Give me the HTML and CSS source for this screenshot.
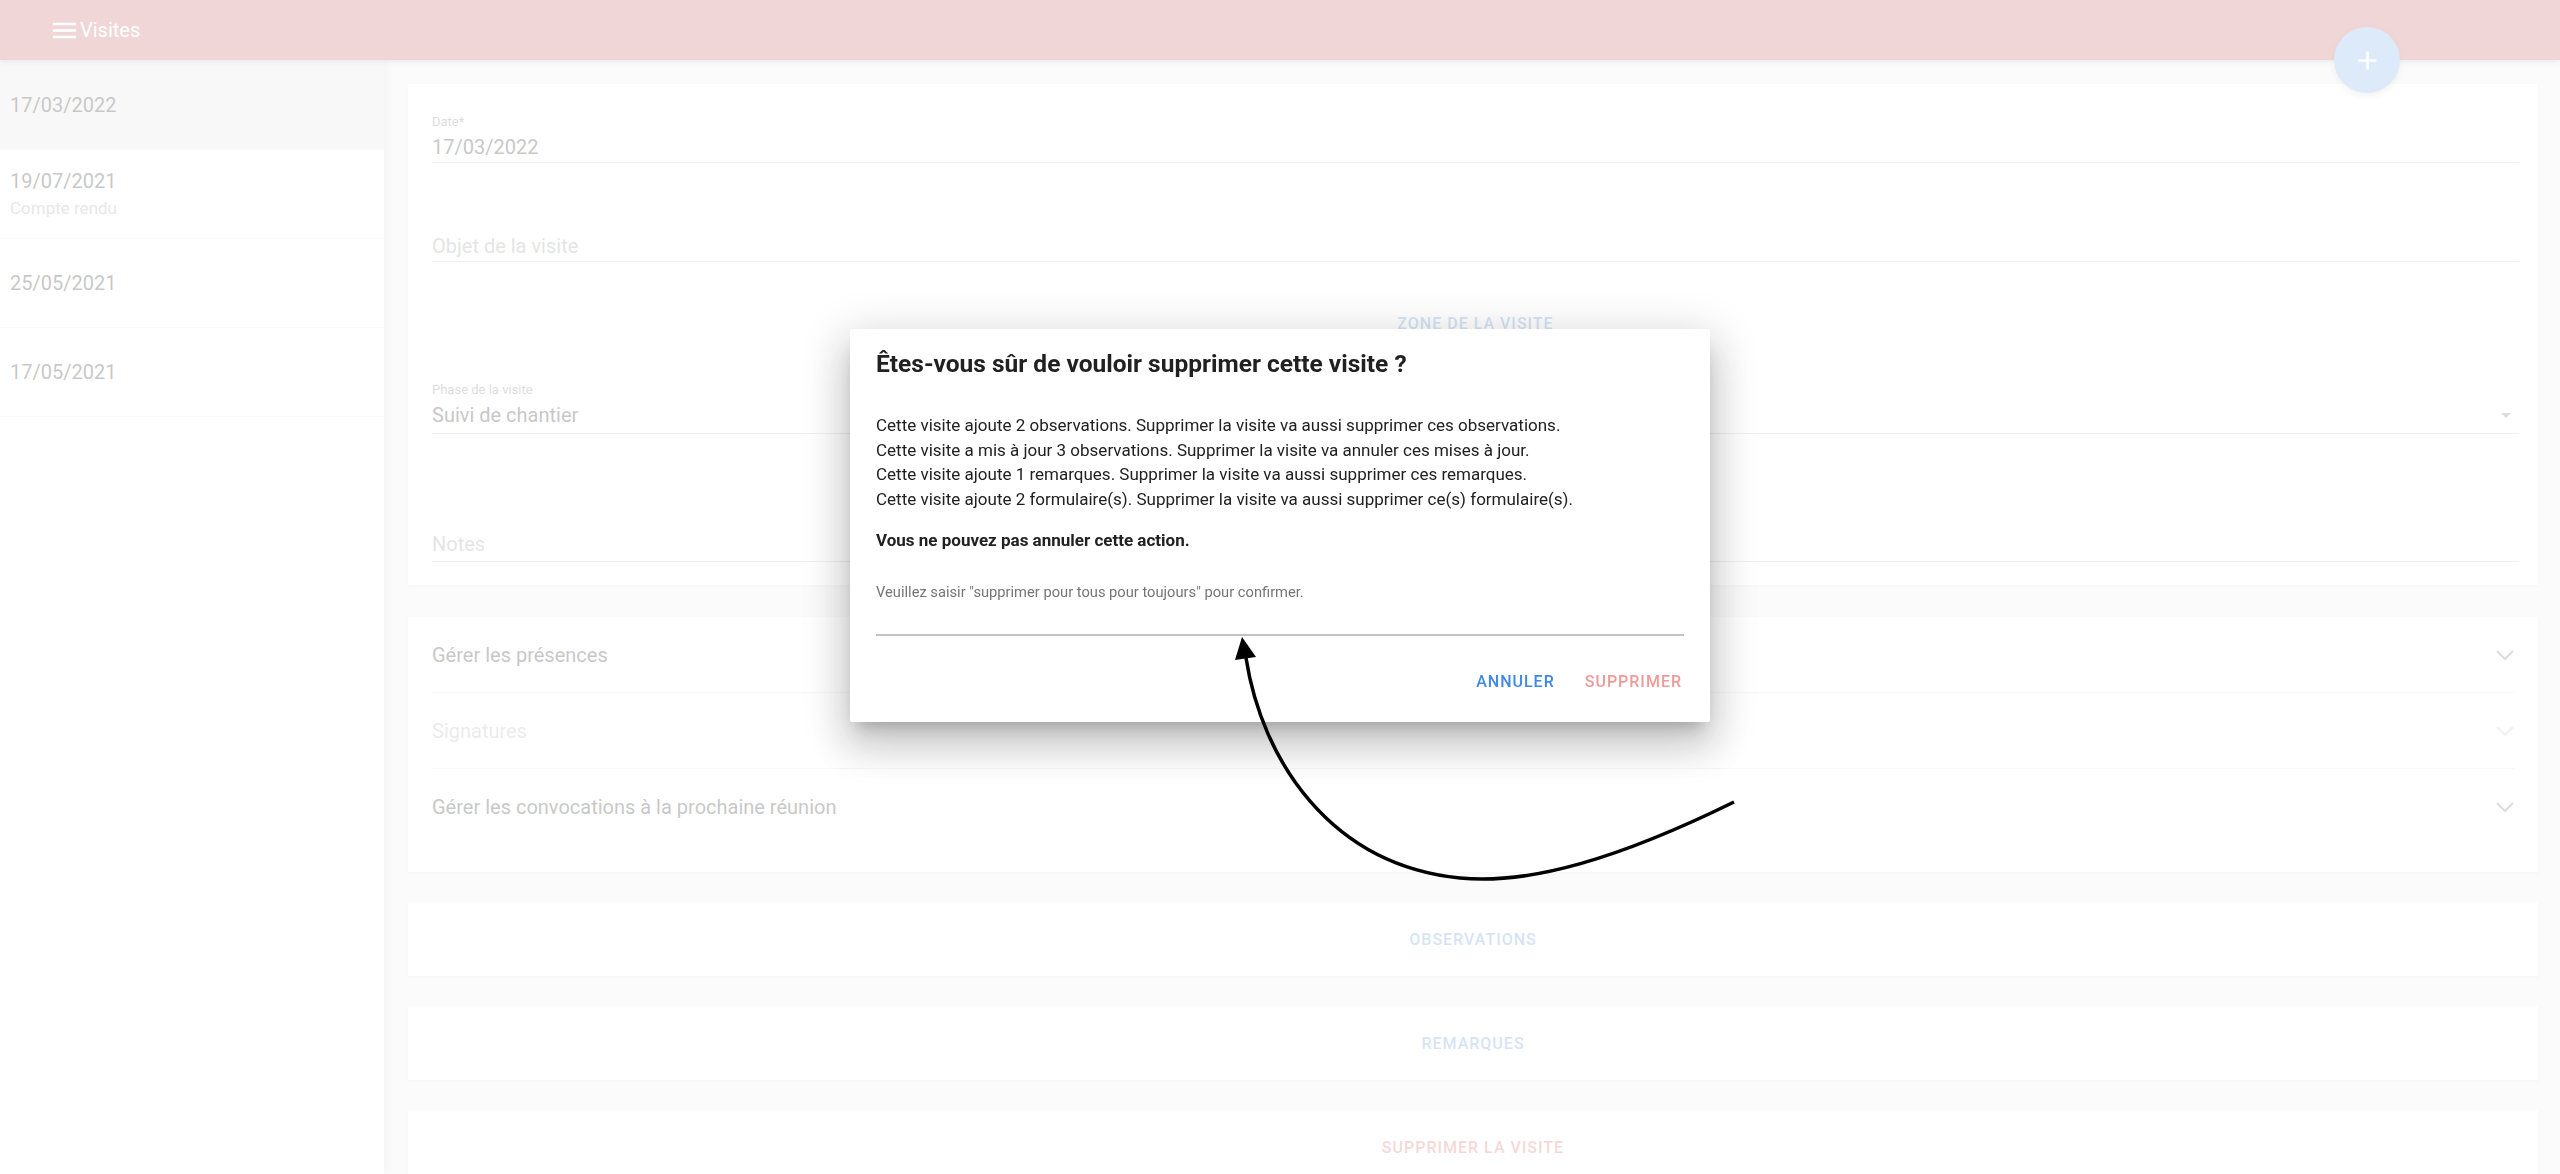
FILE: index.html
```html
<!DOCTYPE html>
<html lang="fr">
<head>
  <meta charset="UTF-8">
  <meta name="viewport" content="width=device-width, initial-scale=1">
  <title>Visites</title>
  <link rel="stylesheet" href="styles.css">
</head>
<body>

  <header class="appbar">
    <svg class="menu-icon" viewBox="0 0 24 24"><path d="M3 18h18v-2H3v2zm0-5h18v-2H3v2zm0-7v2h18V6H3z"/></svg>
    <span class="appbar-title">Visites</span>
    <button class="fab" aria-label="Nouvelle visite">
      <svg viewBox="0 0 24 24"><path d="M19 13h-6v6h-2v-6H5v-2h6V5h2v6h6v2z"/></svg>
    </button>
  </header>

  <div class="layout">
    <aside class="visit-list">
      <div class="visit-item selected"><span class="visit-date">17/03/2022</span></div>
      <div class="visit-item"><span class="visit-date">19/07/2021</span><span class="visit-sub">Compte rendu</span></div>
      <div class="visit-item"><span class="visit-date">25/05/2021</span></div>
      <div class="visit-item"><span class="visit-date">17/05/2021</span></div>
    </aside>

    <main class="visit-detail">
      <section class="card form-card">
        <div class="field">
          <span class="field-label">Date*</span>
          <div class="field-value">17/03/2022</div>
        </div>
        <div class="field field-object">
          <span class="field-label"></span>
          <div class="field-value placeholder">Objet de la visite</div>
        </div>
        <div class="zone-row">
          <button class="text-btn blue">Zone de la visite</button>
        </div>
        <div class="field field-select">
          <span class="field-label">Phase de la visite</span>
          <div class="field-value">
            <span>Suivi de chantier</span>
            <svg class="select-arrow" viewBox="0 0 10 5"><path d="M0 0h10L5 5z"/></svg>
          </div>
        </div>
        <div class="field field-notes">
          <span class="field-label"></span>
          <div class="field-value placeholder">Notes</div>
        </div>
      </section>

      <section class="card panels">
        <div class="panel-header">
          <span>Gérer les présences</span>
          <svg class="chevron" viewBox="0 0 18 10"><path d="M1 1l8 8 8-8"/></svg>
        </div>
        <div class="panel-header disabled">
          <span>Signatures</span>
          <svg class="chevron" viewBox="0 0 18 10"><path d="M1 1l8 8 8-8"/></svg>
        </div>
        <div class="panel-header">
          <span>Gérer les convocations à la prochaine réunion</span>
          <svg class="chevron" viewBox="0 0 18 10"><path d="M1 1l8 8 8-8"/></svg>
        </div>
      </section>

      <section class="card action-card"><button class="text-btn blue">Observations</button></section>
      <section class="card action-card"><button class="text-btn blue">Remarques</button></section>
      <section class="card action-card"><button class="text-btn red">Supprimer la visite</button></section>
    </main>
  </div>

  <div class="scrim">
    <div class="dialog" role="dialog">
      <h2 class="dialog-title">Êtes-vous sûr de vouloir supprimer cette visite ?</h2>
      <div class="dialog-body">
        <p>
          Cette visite ajoute 2 observations. Supprimer la visite va aussi supprimer ces observations.<br>
          Cette visite a mis à jour 3 observations. Supprimer la visite va annuler ces mises à jour.<br>
          Cette visite ajoute 1 remarques. Supprimer la visite va aussi supprimer ces remarques.<br>
          Cette visite ajoute 2 formulaire(s). Supprimer la visite va aussi supprimer ce(s) formulaire(s).
        </p>
        <p class="warning">Vous ne pouvez pas annuler cette action.</p>
        <label class="confirm-label" for="confirmation">Veuillez saisir "supprimer pour tous pour toujours" pour confirmer.</label>
        <input class="confirm-input" id="confirmation" type="text">
      </div>
      <div class="dialog-actions">
        <button class="dialog-btn cancel">Annuler</button>
        <button class="dialog-btn delete">Supprimer</button>
      </div>
    </div>
  </div>

  <!-- flèche d'annotation vers le champ de confirmation -->
  <svg class="annotation" viewBox="0 0 2560 1174">
    <path d="M1734 802 C1620 858 1530 885 1460 878 C1330 865 1262 760 1246 658" fill="none" stroke="#000" stroke-width="3.5"/>
    <polygon points="1242,637 1235,660 1256,657" fill="#000"/>
  </svg>

</body>
</html>
```

FILE: styles.css
```css
html, body {
  margin: 0;
  height: 100%;
  overflow: hidden;
}

body {
  font-family: Roboto, "Liberation Sans", sans-serif;
  color: #212121;
  background-color: #fff;
}

button {
  font-family: inherit;
  border: none;
  background: none;
  cursor: pointer;
  padding: 0;
}

/* barre du haut */
.appbar {
  position: relative;
  z-index: 2;
  height: 60px;
  display: flex;
  align-items: center;
  padding-left: 49px;
  background-color: #c35b5b;
  box-shadow: 0 2px 5px rgba(0,0,0,0.25);
}

.menu-icon {
  width: 31px;
  height: 31px;
  fill: #fff;
}

.appbar-title {
  color: #fff;
  font-size: 20px;
}

.fab {
  position: absolute;
  right: 160px;
  top: 27px;
  width: 66px;
  height: 66px;
  border-radius: 50%;
  background-color: #73abeb;
  display: flex;
  align-items: center;
  justify-content: center;
  box-shadow: 0 3px 6px rgba(0,0,0,0.2);
}

.fab svg {
  width: 31px;
  height: 31px;
  fill: #fff;
}

/* mise en page */
.layout {
  display: flex;
  height: calc(100% - 60px);
}

.visit-list {
  position: relative;
  z-index: 1;
  width: 384px;
  flex-shrink: 0;
  background-color: #fff;
  box-shadow: 2px 0 8px rgba(0,0,0,0.12);
}

.visit-item {
  height: 88px;
  border-bottom: 1px solid #e6e6e6;
  display: flex;
  flex-direction: column;
  justify-content: center;
  padding-left: 10px;
}

.visit-item.selected {
  background-color: #e3e3e3;
  height: 89px;
}

.visit-date {
  font-size: 20px;
  line-height: 28px;
}

.visit-sub {
  font-size: 17px;
  line-height: 26px;
  color: #9b9b9b;
}

.visit-detail {
  flex: 1;
  background-color: #eeeeee;
  padding: 24px 22px 0 24px;
  display: flex;
  flex-direction: column;
  gap: 30px;
}

.card {
  flex-shrink: 0;
  background-color: #fff;
  box-shadow: 0 1px 3px rgba(0,0,0,0.1);
}

/* formulaire de la visite */
.form-card {
  padding: 30px 19px 23px 24px;
}

.field-label {
  display: block;
  height: 16px;
  font-size: 13px;
  line-height: 16px;
  color: #757575;
}

.field-value {
  margin-top: 4px;
  font-size: 20px;
  line-height: 26px;
  padding-bottom: 2px;
  border-bottom: 1px solid #c4c4c4;
}

.placeholder {
  color: #949494;
}

.field-object {
  margin-top: 50px;
}

.zone-row {
  margin-top: 43px;
  display: flex;
  justify-content: center;
}

.field-select {
  margin-top: 41px;
}

.field-select .field-value {
  display: flex;
  justify-content: space-between;
  align-items: center;
  padding-bottom: 5px;
}

.select-arrow {
  width: 10px;
  height: 5px;
  fill: #757575;
  margin-right: 8px;
}

.field-notes {
  margin-top: 77px;
}

.field-notes .field-value {
  padding-bottom: 4px;
}

.text-btn {
  height: 36px;
  padding: 0 16px;
  font-size: 16px;
  font-weight: 500;
  letter-spacing: 1px;
  text-transform: uppercase;
}

.text-btn.blue {
  color: #578fd7;
}

.text-btn.red {
  color: #d75f5f;
}

/* panneaux dépliables */
.panels {
  margin-top: 2px;
  padding: 0 24px 28px 24px;
}

.panel-header {
  height: 75px;
  display: flex;
  align-items: center;
  justify-content: space-between;
  font-size: 20px;
  border-bottom: 1px solid #e0e0e0;
}

.panel-header:last-child {
  border-bottom: none;
}

.panel-header.disabled {
  color: #b0b0b0;
}

.chevron {
  width: 18px;
  height: 10px;
  fill: none;
  stroke: #757575;
  stroke-width: 2;
}

.panel-header.disabled .chevron {
  stroke: #c4c4c4;
}

.action-card {
  height: 74px;
  display: flex;
  align-items: center;
  justify-content: center;
}

/* boîte de confirmation */
.scrim {
  position: fixed;
  inset: 0;
  z-index: 10;
  background-color: rgba(255,255,255,0.75);
  display: flex;
  justify-content: center;
  align-items: flex-start;
  padding-top: 329px;
}

.dialog {
  width: 860px;
  box-sizing: border-box;
  padding: 23px 26px 23px;
  background-color: #fff;
  border-radius: 2px;
  box-shadow: 0 11px 15px -7px rgba(0,0,0,0.2), 0 24px 38px 3px rgba(0,0,0,0.14), 0 9px 46px 8px rgba(0,0,0,0.12);
}

.dialog-title {
  margin: 0;
  font-size: 24.5px;
  font-weight: bold;
  line-height: 24px;
  color: #212121;
}

.dialog-body {
  margin-top: 37px;
  font-size: 17px;
}

.dialog-body p {
  margin: 0;
  line-height: 24.5px;
}

.dialog-body .warning {
  margin-top: 17px;
  line-height: 24px;
  font-weight: bold;
}

.confirm-label {
  display: block;
  margin-top: 32px;
  font-size: 14.7px;
  line-height: 17px;
  color: #757575;
}

.confirm-input {
  display: block;
  width: 100%;
  height: 35px;
  box-sizing: border-box;
  border: none;
  border-bottom: 2px solid #c2c2c2;
  outline: none;
  font-family: inherit;
  font-size: 16px;
}

.dialog-actions {
  margin: 27px -9px 0 0;
  display: flex;
  justify-content: flex-end;
  gap: 8px;
}

.dialog-btn {
  height: 36px;
  padding: 0 11px;
  font-size: 16px;
  font-weight: 500;
  letter-spacing: 1px;
  text-transform: uppercase;
}

.dialog-btn.cancel {
  color: #3f88e4;
}

.dialog-btn.delete {
  color: #ef9a9a;
}

.annotation {
  position: fixed;
  left: 0;
  top: 0;
  width: 2560px;
  height: 1174px;
  z-index: 20;
  pointer-events: none;
}
```
